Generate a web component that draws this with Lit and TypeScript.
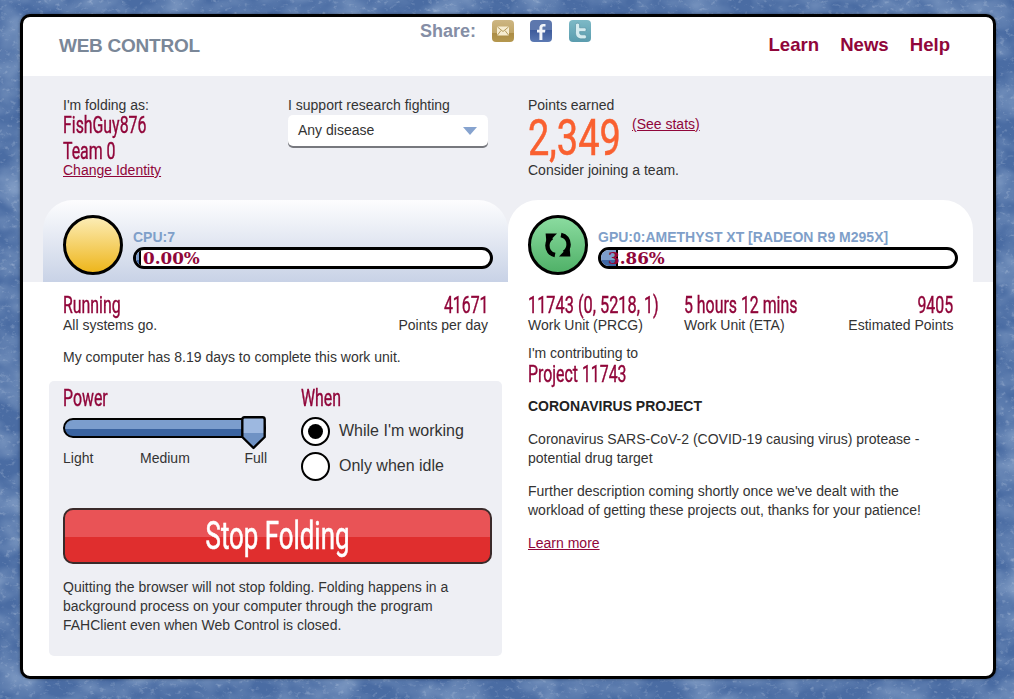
import { LitElement, html, css, svg } from "lit";
import { customElement } from "lit/decorators.js";

const syncIcon = svg`<g fill="none" stroke="#000" stroke-width="4.4">
  <path d="M12 25 C7 24 4.4 20 4.4 15.5 C4.4 12 6 9.4 8.8 7.4"/>
  <path d="M18 5 C23 6 25.6 10 25.6 14.5 C25.6 18 24 20.6 21.2 22.6"/></g>
  <path d="M2.6 3.6 H14 L3.6 14 Z" fill="#000"/>
  <path d="M27.4 26.4 H16 L26.4 16 Z" fill="#000"/>`;

@customElement("app-root")
export class AppRoot extends LitElement {
  static styles = css`
    :host {
      display: block; position: relative; width: 1014px; height: 699px; overflow: hidden;
      font-family: "Liberation Sans", Arial, sans-serif; font-size: 14px; color: #333;
      background: #4f72a6;
    }
    * { box-sizing: border-box; }
    .bg { position: absolute; inset: 0; width: 100%; height: 100%; }
    .frame { position: relative; padding: 14px 18px 20px 20px; height: 699px; }
    .card {
      height: 665px; border: 3px solid #000; border-radius: 10px; background: #fff; overflow: hidden;
      display: flex; flex-direction: column; box-shadow: 0 0 3px rgba(0,0,0,.4);
    }
    .narrow {
      font-family: Roboto, "Liberation Sans", sans-serif; font-weight: 400; color: #90063a;
      display: block; white-space: nowrap; transform: scaleX(.69); transform-origin: left center;
      -webkit-text-stroke: .4px #90063a;
    }
    .right .narrow { transform-origin: right center; }
    a { color: #90063a; text-decoration: underline; }

    header { height: 59px; position: relative; display: flex; }
    .logo { font-weight: bold; font-size: 19px; letter-spacing: -0.25px; color: #7a8798; margin: 18px 0 0 36px; line-height: 22px; width: 361px; }
    .share { display: flex; margin-top: 3px; height: 26px; align-items: flex-start; }
    .share-l { font-weight: bold; font-size: 18px; color: #858ea5; line-height: 22px; width: 72px; }
    .share svg { display: block; width: 22px; height: 22px; margin-right: 16px; }
    .share svg:last-child { margin-left: 1px; }
    nav { margin-left: auto; display: flex; gap: 21px; padding: 17px 43px 0 0; font-weight: bold; font-size: 18.6px; line-height: 22px; color: #90063a; }

    .stats { height: 124px; background: #eeeff4; padding: 21px 0 0 40px; display: flex; }
    .line { line-height: 16px; display: block; }
    .id { width: 225px; }
    .name { font-size: 23px; line-height: 26px; }
    .id a { display: block; line-height: 16px; margin-top: -3px; }
    .dis { width: 240px; }
    .select {
      width: 200px; height: 31px; margin-top: 2px; background: #fff; border-radius: 5px; box-shadow: 0 2px 0 #77787e;
      display: flex; align-items: center; justify-content: space-between; padding: 0 11px 2px 10px; color: #333;
    }
    .arrow { width: 0; height: 0; border-left: 7px solid transparent; border-right: 7px solid transparent; border-top: 8px solid #86a3cf; margin-top: 2px; }
    .pts-row { display: flex; align-items: flex-start; height: 49px; }
    .pts { font-size: 50px; line-height: 50px; color: #f96030; width: 104px; transform: scaleX(.76); -webkit-text-stroke: .5px #f96030; }
    .pts-row a { margin-top: 3px; line-height: 16px; }

    .tabs { height: 82px; display: flex; background: #eeeff4; padding: 0 20px; }
    .tab { width: 465px; height: 82px; padding: 15px 15px 0 20px; display: flex; gap: 10px; }
    .tab.cpu { background: linear-gradient(#fdfdfe 0%, #c8d2e6 100%); border-radius: 30px 30px 0 0; }
    .tab.gpu { background: #fff; border-radius: 30px 30px 0 0; }
    .orb { width: 60px; height: 60px; border-radius: 50%; border: 3px solid #000; flex: none; display: flex; align-items: center; justify-content: center; }
    .orb.y { background: linear-gradient(#fcecb4, #eeb61c); }
    .orb.g { background: linear-gradient(#8adb9f, #50b168); }
    .orb svg { width: 30px; height: 30px; }
    .meter { flex: 1; padding-top: 13px; }
    .dev { font-weight: bold; font-size: 14px; line-height: 19px; color: #7f9fc9; white-space: nowrap; }
    .bar { position: relative; height: 22px; border: 3px solid #000; border-radius: 11px; background: #fff; overflow: hidden; }
    .fill { height: 100%; background: linear-gradient(#7c9dcc 0 60%, #3f68a6 60%); border-right: 2px solid #000; }
    .pct { position: absolute; left: 7px; top: 0; line-height: 16px; font-family: "DejaVu Serif", serif; font-weight: bold; font-size: 16.8px; color: #90063a; }

    .body { flex: 1; display: flex; padding: 0 20px; }
    .col { width: 465px; }
    .col.l { padding: 11px 20px 0; }
    .kv { display: flex; }
    .kv .grow { flex: 1; }
    .right { text-align: right; }
    .val { font-size: 23px; line-height: 26px; }
    .sub { display: block; line-height: 16px; margin-top: -2px; white-space: nowrap; }
    .status { line-height: 16px; margin-top: 16px; }
    .panel { margin: 16px -14px 0; width: 453px; height: 275px; background: #eeeff4; border-radius: 5px; padding: 6px 10px 0 14px; }
    .ctl { display: flex; height: 121px; }
    .power { width: 238px; }
    .h { font-size: 23px; line-height: 24px; }
    .slider { position: relative; width: 203px; height: 20px; margin-top: 7px; border: 2.5px solid #000; border-radius: 10px; background: linear-gradient(#7b9dcd 0 58%, #3a63a0 58%); }
    .thumb { position: absolute; left: 175.5px; top: -4.5px; width: 25px; height: 34px; }
    .scale { display: flex; justify-content: space-between; margin-top: 12px; width: 204px; line-height: 16px; }
    .scale span:nth-child(2) { margin-right: 8px; }
    .radio { display: flex; align-items: center; gap: 9px; font-size: 16px; height: 29px; margin-bottom: 6px; }
    .radio b { font-weight: 400; margin-top: -2px; }
    .when .h { margin-bottom: 6px; }
    .dot { width: 29px; height: 29px; border: 2.5px solid #000; border-radius: 50%; background: #fff; display: flex; align-items: center; justify-content: center; flex: none; }
    .dot i { width: 15px; height: 15px; border-radius: 50%; background: #000; display: block; }
    .stop {
      width: 429px; height: 56px; border: 2px solid #3a2a2a; border-radius: 10px; text-align: center;
      background: linear-gradient(#e95356 0 52%, #e02e2e 52%);
      margin-bottom: 14px;
    }
    .stop span { color: #fff; font-size: 38px; line-height: 52px; transform-origin: center; transform: scaleX(.68); -webkit-text-stroke: .6px #fff; }
    .panel p { margin: 0; line-height: 19px; width: 420px; }
    .col.r { padding: 11px 20px 0; }
    .col.r .wu1 { width: 156px; }
    .col.r .wu1 .val { transform: scaleX(.71); }
    .col.r p { margin: 0 0 14px; line-height: 19px; }
    .proj { margin-top: 12px; }
    .proj .val { position: relative; top: 1px; }
    .title { font-weight: bold; font-size: 14px; color: #222; line-height: 16px; margin: 11px 0 16px; }
    .learn { line-height: 16px; display: block; margin-top: 15px; }
  `;

  private bg() {
    return html`<svg class="bg" xmlns="http://www.w3.org/2000/svg" aria-hidden="true">
      <filter id="blot" x="0" y="0" width="100%" height="100%">
        <feTurbulence type="fractalNoise" baseFrequency=".025 .035" numOctaves="3" seed="3"/>
        <feColorMatrix type="matrix" values="0 0 0 0 .55  0 0 0 0 .68  0 0 0 0 .85  1.6 0 0 0 -0.55"/>
      </filter>
      <filter id="tex" x="0" y="0" width="100%" height="100%">
        <feTurbulence type="fractalNoise" baseFrequency=".18 .24" numOctaves="3" seed="7"/>
        <feColorMatrix type="matrix" values="0 0 0 0 .85  0 0 0 0 .9  0 0 0 0 .97  3 0 0 0 -1.75"/>
      </filter>
      <rect width="100%" height="100%" fill="#4a6ca3"/>
      <rect width="100%" height="100%" filter="url(#blot)" opacity=".5"/>
      <rect width="100%" height="100%" filter="url(#tex)" opacity=".28"/>
    </svg>`;
  }

  private icons() {
    return html`
      <svg viewBox="0 0 22 22"><defs><linearGradient id="gm" x1="0" y1="0" x2="0" y2="1"><stop offset="0" stop-color="#cdb683"/><stop offset=".6" stop-color="#c0a566"/><stop offset=".6" stop-color="#ab8c45"/><stop offset="1" stop-color="#b5984f"/></linearGradient></defs>
        <rect width="22" height="22" rx="4" fill="url(#gm)"/>
        <rect x="5" y="6.5" width="12" height="9" rx="1" fill="#f6ecd0"/>
        <path d="M5.5 7 L11 11.5 L16.5 7 M5.5 15 L9 10.5 M16.5 15 L13 10.5" fill="none" stroke="#b39a5c" stroke-width="1"/></svg>
      <svg viewBox="0 0 22 22"><defs><linearGradient id="gf" x1="0" y1="0" x2="0" y2="1"><stop offset="0" stop-color="#5d77ad"/><stop offset=".45" stop-color="#5d77ad"/><stop offset=".45" stop-color="#3d5a9a"/><stop offset="1" stop-color="#5b79b3"/></linearGradient></defs>
        <rect width="22" height="22" rx="4" fill="url(#gf)"/>
        <path d="M12.4 20 V12.6 H15 L15.4 9.7 H12.4 V8 C12.4 7.1 12.8 6.6 13.8 6.6 H15.5 V4 C15 4 14.1 3.9 13.2 3.9 C10.9 3.9 9.4 5.3 9.4 7.7 V9.7 H7 V12.6 H9.4 V20 Z" fill="#f2f4f9"/></svg>
      <svg viewBox="0 0 22 22"><defs><linearGradient id="gt" x1="0" y1="0" x2="0" y2="1"><stop offset="0" stop-color="#7db9c6"/><stop offset="1" stop-color="#5a9cae"/></linearGradient></defs>
        <rect width="22" height="22" rx="4" fill="url(#gt)"/>
        <path d="M6.5 5 V12.5 C6.5 16.4 8.8 18.8 12.6 18.8 H15.6 C18 18.8 18 14.8 15.6 14.8 H12.8 C11.4 14.8 10.6 14 10.6 12.6 V11.6 H15.4 C17.8 11.6 17.8 7.8 15.4 7.8 H10.6 V5 C10.6 2.6 6.5 2.6 6.5 5 Z" fill="#d4ebef" stroke="#4f8a9c" stroke-width=".6"/></svg>`;
  }

  render() {
    return html`
      ${this.bg()}
      <div class="frame"><div class="card">
        <header>
          <div class="logo">WEB CONTROL</div>
          <div class="share"><span class="share-l">Share:</span>${this.icons()}</div>
          <nav><span>Learn</span><span>News</span><span>Help</span></nav>
        </header>
        <section class="stats">
          <div class="id">
            <span class="line">I'm folding as:</span>
            <span class="name narrow">FishGuy876</span>
            <span class="name narrow">Team 0</span>
            <a href="#">Change Identity</a>
          </div>
          <div class="dis">
            <span class="line">I support research fighting</span>
            <div class="select"><span>Any disease</span><span class="arrow"></span></div>
          </div>
          <div>
            <span class="line">Points earned</span>
            <div class="pts-row"><span class="pts narrow">2,349</span><a href="#">(See stats)</a></div>
            <span class="line">Consider joining a team.</span>
          </div>
        </section>
        <section class="tabs">
          <div class="tab cpu">
            <div class="orb y"></div>
            <div class="meter"><div class="dev">CPU:7</div>
              <div class="bar"><div class="fill" style="width:1.5%"></div><span class="pct">0.00%</span></div></div>
          </div>
          <div class="tab gpu">
            <div class="orb g"><svg viewBox="0 0 30 30">${syncIcon}</svg></div>
            <div class="meter"><div class="dev">GPU:0:AMETHYST XT [RADEON R9 M295X]</div>
              <div class="bar"><div class="fill" style="width:4.7%"></div><span class="pct">3.86%</span></div></div>
          </div>
        </section>
        <section class="body">
          <div class="col l">
            <div class="kv">
              <div class="grow"><span class="val narrow">Running</span><span class="sub">All systems go.</span></div>
              <div class="right"><span class="val narrow">41671</span><span class="sub">Points per day</span></div>
            </div>
            <div class="status">My computer has 8.19 days to complete this work unit.</div>
            <div class="panel">
              <div class="ctl">
                <div class="power">
                  <span class="h narrow">Power</span>
                  <div class="slider">
                    <svg class="thumb" viewBox="0 0 25 34"><defs><linearGradient id="gth" x1="0" y1="0" x2="0" y2="1"><stop offset=".5" stop-color="#9db8e0"/><stop offset=".5" stop-color="#6f92c4"/></linearGradient></defs>
                      <path d="M3.5 1.3 H21.5 Q23.7 1.3 23.7 3.5 V21 L12.5 32 L1.3 21 V3.5 Q1.3 1.3 3.5 1.3 Z" fill="url(#gth)" stroke="#000" stroke-width="2.4" stroke-linejoin="round"/></svg>
                  </div>
                  <div class="scale"><span>Light</span><span>Medium</span><span>Full</span></div>
                </div>
                <div class="when">
                  <span class="h narrow">When</span>
                  <div class="radio"><span class="dot"><i></i></span><b>While I'm working</b></div>
                  <div class="radio"><span class="dot"></span><b>Only when idle</b></div>
                </div>
              </div>
              <div class="stop"><span class="narrow">Stop Folding</span></div>
              <p>Quitting the browser will not stop folding. Folding happens in a background process on your computer through the program FAHClient even when Web Control is closed.</p>
            </div>
          </div>
          <div class="col r">
            <div class="kv">
              <div class="wu1"><span class="val narrow">11743 (0, 5218, 1)</span><span class="sub">Work Unit (PRCG)</span></div>
              <div class="grow"><span class="val narrow">5 hours 12 mins</span><span class="sub">Work Unit (ETA)</span></div>
              <div class="right"><span class="val narrow">9405</span><span class="sub">Estimated Points</span></div>
            </div>
            <div class="proj"><span class="line">I'm contributing to</span><span class="val narrow">Project 11743</span></div>
            <div class="title">CORONAVIRUS PROJECT</div>
            <p>Coronavirus SARS-CoV-2 (COVID-19 causing virus) protease - potential drug target</p>
            <p>Further description coming shortly once we've dealt with the workload of getting these projects out, thanks for your patience!</p>
            <a class="learn" href="#">Learn more</a>
          </div>
        </section>
      </div></div>`;
  }
}
